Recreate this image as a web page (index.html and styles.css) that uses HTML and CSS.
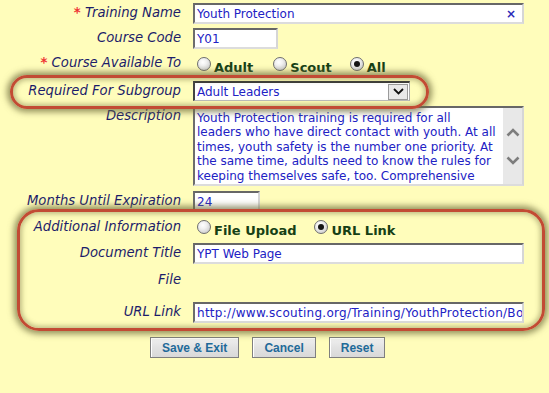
FILE: index.html
```html
<!DOCTYPE html>
<html>
<head>
<meta charset="utf-8">
<link rel="stylesheet" href="styles.css">
</head>
<body>
<div class="page">
  <div class="form">
    <div class="row r1">
      <div class="lbl"><span class="req">*</span> Training Name</div>
      <div class="input w-wide">Youth Protection<span class="clear">×</span></div>
    </div>
    <div class="row r2">
      <div class="lbl">Course Code</div>
      <div class="input w-code">Y01</div>
    </div>
    <div class="row r3">
      <div class="lbl"><span class="req">*</span> Course Available To</div>
      <div class="radios">
        <span class="radio"></span><span class="rtext gap1">Adult</span>
        <span class="radio"></span><span class="rtext gap2">Scout</span>
        <span class="radio checked"></span><span class="rtext">All</span>
      </div>
    </div>
    <div class="row r4">
      <div class="lbl">Required For Subgroup</div>
      <div class="select">
        <span class="seltext">Adult Leaders</span>
        <span class="selbtn"><svg width="11" height="7" viewBox="0 0 11 7"><polyline points="1,1 5.5,5.5 10,1" fill="none" stroke="#111" stroke-width="1.8"/></svg></span>
      </div>
    </div>
    <div class="row r5">
      <div class="lbl">Description</div>
      <div class="textarea">
        <div class="tatext">
          <div>Youth Protection training is required for all</div>
          <div>leaders who have direct contact with youth. At all</div>
          <div>times, youth safety is the number one priority. At</div>
          <div>the same time, adults need to know the rules for</div>
          <div>keeping themselves safe, too. Comprehensive</div>
        </div>
        <div class="scroll">
          <svg width="14" height="9" viewBox="0 0 14 9"><polyline points="1.5,7.5 7,2 12.5,7.5" fill="none" stroke="#7d7d7d" stroke-width="2.6"/></svg>
          <svg width="14" height="9" viewBox="0 0 14 9"><polyline points="1.5,1.5 7,7 12.5,1.5" fill="none" stroke="#7d7d7d" stroke-width="2.6"/></svg>
        </div>
      </div>
    </div>
    <div class="row r6">
      <div class="lbl">Months Until Expiration</div>
      <div class="input w-months">24</div>
    </div>
    <div class="row r7">
      <div class="lbl">Additional Information</div>
      <div class="radios">
        <span class="radio"></span><span class="rtext gap3">File Upload</span>
        <span class="radio checked"></span><span class="rtext">URL Link</span>
      </div>
    </div>
    <div class="row r8">
      <div class="lbl">Document Title</div>
      <div class="input w-wide">YPT Web Page</div>
    </div>
    <div class="row r9">
      <div class="lbl lbl-file">File</div>
    </div>
    <div class="row r10">
      <div class="lbl">URL Link</div>
      <div class="input w-wide clip url">http://www.scouting.org/Training/YouthProtection/Bo</div>
    </div>
    <div class="buttons">
      <button class="btn">Save &amp; Exit</button>
      <button class="btn">Cancel</button>
      <button class="btn">Reset</button>
    </div>
  </div>
  <div class="ring ring1"></div>
  <div class="ring ring2"></div>
</div>
</body>
</html>
```
FILE: styles.css
```css
html, body {
  margin: 0;
  padding: 0;
  background: #fffdbb;
}
.page {
  position: relative;
  width: 549px;
  height: 393px;
  overflow: hidden;
  background: #fffdbb;
}
.form {
  padding-top: 3px;
  font-family: "DejaVu Sans", Verdana, sans-serif;
}
.row {
  display: flex;
  align-items: flex-start;
}
.r1 { height: 25px; }
.r2 { height: 25px; }
.r3 { height: 28px; }
.r4 { height: 25px; }
.r5 { height: 85px; }
.r6 { height: 25px; }
.r7 { height: 27px; }
.r8 { height: 25px; }
.r9 { height: 34px; }
.r10 { height: 35px; }
.r3 .lbl { margin-top: 0; }
.r7 .lbl { margin-top: 1px; }
.lbl-file { margin-top: 2px; }

.lbl {
  width: 193px;
  box-sizing: border-box;
  padding-right: 12px;
  text-align: right;
  font-style: italic;
  font-size: 13.2px;
  line-height: 20px;
  color: #1c1c6a;
  white-space: nowrap;
  flex: none;
}
.req {
  color: #ee3333;
  font-style: normal;
  font-weight: bold;
}
.input {
  position: relative;
  box-sizing: border-box;
  height: 21px;
  background: #fff;
  border-top: 2px solid #676767;
  border-left: 2px solid #6d6d6d;
  border-right: 2px solid #d6d6d6;
  border-bottom: 2px solid #dcdcdc;
  padding: 0 2px;
  font-size: 12px;
  line-height: 18px;
  color: #2121c4;
  white-space: nowrap;
}
.clip { overflow: hidden; }
.url { letter-spacing: 0.28px; }
.w-wide { width: 331px; }
.w-code { width: 85px; }
.w-months { width: 67px; }
.clear {
  position: absolute;
  right: 6px;
  top: 0;
  font-weight: bold;
  font-size: 12px;
  color: #2a2ab8;
}
.radios {
  display: flex;
  align-items: flex-start;
  padding-left: 4px;
}
.radio {
  box-sizing: border-box;
  width: 14px;
  height: 14px;
  margin-top: 4px;
  border-radius: 50%;
  border: 1px solid #6e6e6e;
  background: radial-gradient(circle at 40% 35%, #ffffff 0%, #f0f0f0 35%, #cfcfcf 80%, #b5b5b5 100%);
  display: flex;
  align-items: center;
  justify-content: center;
  flex: none;
}
.radio.checked::after {
  content: "";
  width: 6px;
  height: 6px;
  border-radius: 50%;
  background: #151515;
}
.rtext {
  margin-top: 5px;
  margin-left: 3px;
  font-weight: bold;
  font-size: 13px;
  line-height: 20px;
  color: #154015;
}
.gap1 { margin-right: 20px; }
.gap2 { margin-right: 18px; }
.gap3 { margin-right: 18px; }

.select {
  box-sizing: border-box;
  width: 217px;
  height: 20px;
  display: flex;
  align-items: center;
  justify-content: space-between;
  background: #fff;
  border-top: 2px solid #3a3a3a;
  border-left: 2px solid #444;
  border-right: 1px solid #aaa;
  border-bottom: 1px solid #bbb;
  padding-left: 2px;
  padding-right: 1px;
  font-size: 12px;
  color: #2121c4;
}
.selbtn {
  box-sizing: border-box;
  width: 20px;
  height: 16px;
  background: #e9e9e9;
  border: 1px solid #9b9b9b;
  display: flex;
  align-items: center;
  justify-content: center;
}
.textarea {
  box-sizing: border-box;
  width: 331px;
  height: 80px;
  display: flex;
  background: #fff;
  border-top: 2px solid #676767;
  border-left: 2px solid #6d6d6d;
  border-right: 2px solid #d6d6d6;
  border-bottom: 2px solid #dcdcdc;
}
.tatext {
  flex: 1;
  padding: 3px 0 0 2px;
  font-size: 12px;
  line-height: 14.4px;
  color: #2121c4;
  white-space: nowrap;
  overflow: hidden;
}
.scroll {
  width: 19px;
  flex: none;
  background: #e8e8e8;
  display: flex;
  flex-direction: column;
  align-items: center;
  padding-top: 20px;
  gap: 19px;
  box-sizing: border-box;
}
.scroll svg { display: block; }

.buttons {
  display: flex;
  gap: 13px;
  padding-left: 150px;
}
.btn {
  box-sizing: border-box;
  height: 21px;
  padding: 0 11px;
  margin: 0;
  border: 1px solid #7f7f7f;
  background: linear-gradient(#f0f0f0, #e2e2e2 50%, #d9d9d9);
  box-shadow: inset 1px 1px 0 #ffffff;
  font-family: "Liberation Sans", Arial, sans-serif;
  font-weight: bold;
  font-size: 12px;
  color: #1f6a99;
  border-radius: 0;
}
.ring {
  position: absolute;
  box-sizing: border-box;
  border: 3px solid #c24b34;
  box-shadow: 0 0 6px 3px rgba(112, 110, 62, 0.75), inset 0 0 5px 2px rgba(112, 110, 62, 0.45);
}
.ring1 {
  left: 10px;
  top: 75px;
  width: 419px;
  height: 34px;
  border-radius: 17px;
}
.ring2 {
  left: 17px;
  top: 209px;
  width: 528px;
  height: 122px;
  border-radius: 22px;
}
```
